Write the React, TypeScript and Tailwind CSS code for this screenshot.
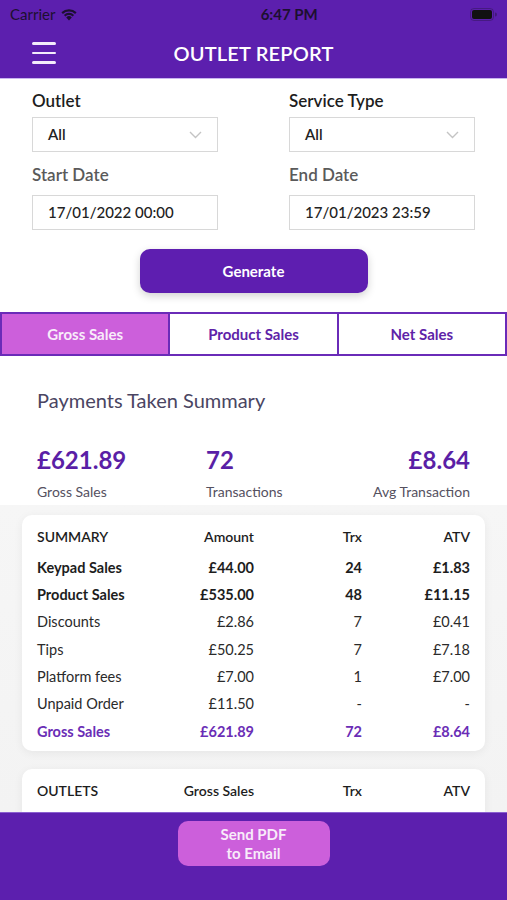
import React from "react";

const font = { fontFamily: "Lato, 'Noto Sans', 'Liberation Sans', sans-serif" };

function Wifi() {
  return (
    <svg width="18" height="13" viewBox="0 0 18 13">
      <path d="M9 12.5 L6.2 9.4 A4 4 0 0 1 11.8 9.4 Z" fill="#1c1030" />
      <path d="M3.9 6.9 A7.3 7.3 0 0 1 14.1 6.9 L12.6 8.5 A5.2 5.2 0 0 0 5.4 8.5 Z" fill="#1c1030" />
      <path d="M1.4 4.3 A11 11 0 0 1 16.6 4.3 L15.1 5.9 A8.8 8.8 0 0 0 2.9 5.9 Z" fill="#1c1030" />
    </svg>
  );
}

function Battery() {
  return (
    <svg width="27" height="13" viewBox="0 0 27 13">
      <rect x="0.5" y="0.5" width="23" height="12" rx="3.5" fill="none" stroke="#1c1030" strokeOpacity="0.35" />
      <rect x="2" y="2" width="20" height="9" rx="2" fill="#111" />
      <path d="M25 4.5 v4 a2 2 0 0 0 0 -4z" fill="#1c1030" fillOpacity="0.4" />
    </svg>
  );
}

function Chevron() {
  return (
    <svg width="13" height="8" viewBox="0 0 13 8">
      <path d="M1 1 L6.5 6.5 L12 1" fill="none" stroke="#c4c4c4" strokeWidth="1.4" />
    </svg>
  );
}

const rows: { l: string; a: string; t: string; v: string; kind: "bold" | "norm" | "total" }[] = [
  { l: "Keypad Sales", a: "£44.00", t: "24", v: "£1.83", kind: "bold" },
  { l: "Product Sales", a: "£535.00", t: "48", v: "£11.15", kind: "bold" },
  { l: "Discounts", a: "£2.86", t: "7", v: "£0.41", kind: "norm" },
  { l: "Tips", a: "£50.25", t: "7", v: "£7.18", kind: "norm" },
  { l: "Platform fees", a: "£7.00", t: "1", v: "£7.00", kind: "norm" },
  { l: "Unpaid Order", a: "£11.50", t: "-", v: "-", kind: "norm" },
  { l: "Gross Sales", a: "£621.89", t: "72", v: "£8.64", kind: "total" },
];

export default function App() {
  return (
    <div style={font} className="w-[507px] h-[900px] flex flex-col overflow-hidden bg-white">
      {/* Header */}
      <div className="bg-[#5c1fae] shrink-0">
        <div className="h-[28px] flex items-center justify-between px-[10px] text-[#1c1030]">
          <div className="flex items-center gap-[5px] text-[15px]">
            <span>Carrier</span>
            <Wifi />
          </div>
          <div className="text-[15px] font-bold pl-[30px]">6:47 PM</div>
          <Battery />
        </div>
        <div className="h-[50px] relative flex items-center justify-center">
          <div className="absolute left-[32px] top-[14px] flex flex-col gap-[7px]">
            <div className="w-[24px] h-[2.5px] bg-[#f3ecfb] rounded" />
            <div className="w-[24px] h-[2.5px] bg-[#f3ecfb] rounded" />
            <div className="w-[24px] h-[2.5px] bg-[#f3ecfb] rounded" />
          </div>
          <div className="text-white text-[20px] font-semibold tracking-[0.2px]">OUTLET REPORT</div>
        </div>
        <div className="h-[1px] bg-[#c8b4f0]" />
      </div>

      {/* Content */}
      <div className="flex-1 min-h-0 overflow-hidden flex flex-col">
        <div className="shrink-0 grid grid-cols-2 gap-x-[71px] px-[32px] pt-[10px]">
          <div>
            <div className="h-[24px] flex items-center text-[17px] font-semibold text-[#1d1d1d]">Outlet</div>
            <div className="mt-[4px] h-[35px] border border-[#d8d8d8] flex items-center justify-between pl-[15px] pr-[15px] text-[15px] font-semibold text-[#222]">
              <span>All</span>
              <Chevron />
            </div>
          </div>
          <div>
            <div className="h-[24px] flex items-center text-[17px] font-semibold text-[#1d1d1d]">Service Type</div>
            <div className="mt-[4px] h-[35px] border border-[#d8d8d8] flex items-center justify-between pl-[15px] pr-[15px] text-[15px] font-semibold text-[#222]">
              <span>All</span>
              <Chevron />
            </div>
          </div>
          <div className="mt-[11px]">
            <div className="h-[24px] flex items-center text-[17px] font-semibold text-[#5a5a5a]">Start Date</div>
            <div className="mt-[8px] h-[35px] border border-[#d8d8d8] flex items-center pl-[15px] text-[15px] font-medium text-[#222]">
              17/01/2022 00:00
            </div>
          </div>
          <div className="mt-[11px]">
            <div className="h-[24px] flex items-center text-[17px] font-semibold text-[#5a5a5a]">End Date</div>
            <div className="mt-[8px] h-[35px] border border-[#d8d8d8] flex items-center pl-[15px] text-[15px] font-medium text-[#222]">
              17/01/2023 23:59
            </div>
          </div>
        </div>

        <div className="shrink-0 flex justify-center mt-[19px]">
          <div className="w-[228px] h-[44px] rounded-[10px] bg-[#5e1eb0] shadow-[0_3px_8px_rgba(0,0,0,0.18)] flex items-center justify-center text-white text-[15px] font-bold">
            Generate
          </div>
        </div>

        <div className="shrink-0 mt-[19px] h-[44px] flex border-2 border-[#6a2bb8]">
          <div className="flex-1 bg-[#cc5fdb] flex items-center justify-center text-[15px] font-bold text-[#f8ecfa]">Gross Sales</div>
          <div className="flex-1 border-l-2 border-[#6a2bb8] bg-white flex items-center justify-center text-[15px] font-bold text-[#5e23a8]">Product Sales</div>
          <div className="flex-1 border-l-2 border-[#6a2bb8] bg-white flex items-center justify-center text-[15px] font-bold text-[#5e23a8]">Net Sales</div>
        </div>

        <div className="shrink-0 px-[37px] pt-[30px] text-[20px] leading-[28px] text-[#4a4562]">Payments Taken Summary</div>

        <div className="shrink-0 px-[37px] mt-[30px] grid grid-cols-[169px_1fr_auto]">
          <div className="text-[24px] leading-[32px] font-bold text-[#5a1fa6]">£621.89</div>
          <div className="text-[24px] leading-[32px] font-bold text-[#5a1fa6]">72</div>
          <div className="text-[24px] leading-[32px] font-bold text-[#5a1fa6] text-right">£8.64</div>
          <div className="mt-[6px] text-[14px] leading-[20px] text-[#55515f]">Gross Sales</div>
          <div className="mt-[6px] text-[14px] leading-[20px] text-[#55515f]">Transactions</div>
          <div className="mt-[6px] text-[14px] leading-[20px] text-[#55515f] text-right">Avg Transaction</div>
        </div>

        <div className="mt-[3px] flex-1 min-h-0 bg-gradient-to-b from-[#f6f6f6] to-[#f3f3f3] px-[22px] pt-[10px]">
          <div className="bg-white rounded-[10px] shadow-[0_2px_10px_rgba(0,0,0,0.06)] px-[15px] pt-[7px] pb-[6px]">
            <div className="grid grid-cols-[113px_104px_108px_1fr] h-[28px] items-center mb-[4px] text-[14px] font-semibold text-[#1d1d1d]">
              <div>SUMMARY</div>
              <div className="text-right">Amount</div>
              <div className="text-right">Trx</div>
              <div className="text-right">ATV</div>
            </div>
            {rows.map((r) => (
              <div
                key={r.l}
                className={
                  "grid grid-cols-[113px_104px_108px_1fr] h-[27.33px] items-center text-[14.5px] " +
                  (r.kind === "bold"
                    ? "font-bold text-[#1d1d1d]"
                    : r.kind === "total"
                    ? "font-bold text-[#6a2db6]"
                    : "text-[#2a2a2a]")
                }
              >
                <div className="whitespace-nowrap">{r.l}</div>
                <div className="text-right">{r.a}</div>
                <div className="text-right">{r.t}</div>
                <div className="text-right">{r.v}</div>
              </div>
            ))}
          </div>

          <div className="mt-[18px] bg-white rounded-t-[10px] shadow-[0_2px_10px_rgba(0,0,0,0.06)] px-[15px] pt-[7px] pb-[10px]">
            <div className="grid grid-cols-[113px_104px_108px_1fr] h-[28px] items-center text-[14px] font-semibold text-[#1d1d1d]">
              <div>OUTLETS</div>
              <div className="text-right">Gross Sales</div>
              <div className="text-right">Trx</div>
              <div className="text-right">ATV</div>
            </div>
          </div>
        </div>
      </div>

      {/* Bottom bar */}
      <div className="h-[88px] shrink-0 bg-[#5c1fae] border-t border-[#8a5fd0] flex justify-center">
        <div className="mt-[8px] w-[152px] h-[45px] rounded-[10px] bg-[#cc5fdb] flex flex-col items-center justify-center text-[15px] leading-[19px] font-bold text-[#f8ecfa]">
          <span>Send PDF</span>
          <span>to Email</span>
        </div>
      </div>
    </div>
  );
}
